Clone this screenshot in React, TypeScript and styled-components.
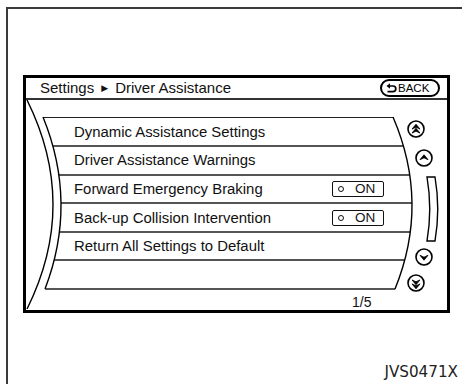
import { FC } from "react";
import styled, { createGlobalStyle } from "styled-components";

const GlobalStyle = createGlobalStyle`
  html, body {
    margin: 0;
    padding: 0;
    background: #fff;
  }
  body {
    font-family: "Liberation Sans", Arial, sans-serif;
    color: #111;
  }
`;

const Frame = styled.div`
  margin: 7px 0 0 6px;
  height: 377px;
  box-sizing: border-box;
  border-left: 2px solid #3a3a3a;
  border-top: 2px solid #3a3a3a;
  padding: 66px 4px 0 15px;
`;

const Screen = styled.div`
  width: 427px;
  height: 238px;
  box-sizing: border-box;
  border: 3px solid #000;
  display: flex;
  flex-direction: column;
`;

const Header = styled.div`
  height: 23px;
  box-sizing: border-box;
  border-bottom: 2px solid #333;
  display: flex;
  align-items: center;
  justify-content: space-between;
  padding: 0 7px 0 14px;

  & > p {
    margin: 0;
    font-size: 15px;
    line-height: 16px;
    display: flex;
    align-items: center;
    gap: 7px;
  }
`;

const Crumb = styled.span`
  font-family: "DejaVu Sans", sans-serif;
  font-size: 9px;
  line-height: 8px;
`;

const BackButton = styled.button`
  width: 60px;
  height: 18px;
  box-sizing: border-box;
  border: 2px solid #000;
  border-radius: 10px;
  background: #fff;
  padding: 0 0 0 4px;
  display: flex;
  align-items: center;
  gap: 1px;
  font-family: "Liberation Sans", Arial, sans-serif;
  font-size: 11.5px;
  color: #000;
`;

const Body = styled.div`
  flex: 1;
  position: relative;
  display: flex;
`;

const Main = styled.div`
  width: 386px;
  display: flex;
  flex-direction: column;
  padding-top: 17px;
`;

const List = styled.div`
  margin-left: 17px;
  border-top: 1px solid #222;
`;

const Row = styled.div`
  height: 28.6px;
  box-sizing: border-box;
  border-bottom: 2px solid #555;
  display: flex;
  align-items: center;
  justify-content: space-between;
  padding: 0 28px 0 31px;
  font-size: 14.9px;
`;

const OnBox = styled.div`
  width: 52px;
  height: 16px;
  box-sizing: border-box;
  border: 1.5px solid #111;
  border-radius: 2px;
  display: flex;
  align-items: center;
  padding-left: 5px;
  font-size: 13.5px;

  & > i {
    width: 6px;
    height: 6px;
    box-sizing: border-box;
    border: 1.5px solid #111;
    border-radius: 50%;
    margin-right: 11px;
  }
`;

const Pager = styled.div`
  padding: 4px 0 0 326px;
  font-size: 14px;
`;

const ScrollColumn = styled.div`
  position: relative;
  z-index: 1;
  display: flex;
  flex-direction: column;
  padding-top: 20px;
`;

const ScrollItem = styled.div<{ $x: number; $mt: number }>`
  margin-left: ${(p) => p.$x}px;
  margin-top: ${(p) => p.$mt}px;
  display: flex;

  & svg {
    display: block;
  }
`;

const Overlay = styled.svg`
  position: absolute;
  left: 0;
  top: 0;
  pointer-events: none;
`;

const Caption = styled.div`
  margin-top: 50px;
  text-align: right;
  font-family: "DejaVu Sans", sans-serif;
  font-size: 15.2px;
  color: #222;
`;

const BackIcon = () => (
  <svg width="11" height="11" viewBox="0 0 11 11">
    <path d="M3.5 3 H7 A2.8 2.8 0 0 1 7 8.6 H1.5" fill="none" stroke="#000" strokeWidth="1.7" />
    <path d="M0.5 3 L4 0.3 L4 5.7 Z" fill="#000" />
  </svg>
);

const Chevron = ({ y, down }: { y: number; down?: boolean }) => (
  <path
    d={
      down
        ? `M9 ${y + 3.6} L5 ${y - 1.3} L9 ${y + 0.6} L13 ${y - 1.3} Z`
        : `M9 ${y - 3.6} L13 ${y + 1.3} L9 ${y - 0.6} L5 ${y + 1.3} Z`
    }
    fill="#000"
    stroke="#000"
    strokeWidth="0.8"
    strokeLinejoin="round"
  />
);

const RoundButton: FC<{ down?: boolean; double?: boolean }> = ({ down, double }) => (
  <svg width="18" height="18" viewBox="0 0 18 18">
    <circle cx="9" cy="9" r="8" fill="#fff" stroke="#000" strokeWidth="1.6" />
    {double ? (
      <>
        <Chevron y={down ? 7.2 : 7.8} down={down} />
        <Chevron y={down ? 11.2 : 11.8} down={down} />
      </>
    ) : (
      <Chevron y={down ? 8.6 : 9.4} down={down} />
    )}
  </svg>
);

const ScrollBar = () => (
  <svg width="14" height="66" viewBox="0 0 14 66">
    <path
      d="M1 1 L9 1 Q14.5 33 9 65 L1 65 Q6.5 33 1 1 Z"
      fill="#fff"
      stroke="#000"
      strokeWidth="1.4"
    />
  </svg>
);

const rows: { label: string; on?: boolean }[] = [
  { label: "Dynamic Assistance Settings" },
  { label: "Driver Assistance Warnings" },
  { label: "Forward Emergency Braking", on: true },
  { label: "Back-up Collision Intervention", on: true },
  { label: "Return All Settings to Default" },
  { label: "" },
];

const App: FC = () => {
  return (
    <>
      <GlobalStyle />
      <Frame>
        <Screen>
          <Header>
            <p>
              Settings <Crumb>▶</Crumb> Driver Assistance
            </p>
            <BackButton>
              <BackIcon />
              BACK
            </BackButton>
          </Header>
          <Body>
            <Main>
              <List>
                {rows.map((r, i) => (
                  <Row key={i}>
                    <span>{r.label}</span>
                    {r.on && (
                      <OnBox>
                        <i />
                        ON
                      </OnBox>
                    )}
                  </Row>
                ))}
              </List>
              <Pager>1/5</Pager>
            </Main>
            <ScrollColumn>
              <ScrollItem $x={-5} $mt={0}>
                <RoundButton double />
              </ScrollItem>
              <ScrollItem $x={3} $mt={11}>
                <RoundButton />
              </ScrollItem>
              <ScrollItem $x={14} $mt={9}>
                <ScrollBar />
              </ScrollItem>
              <ScrollItem $x={3} $mt={6}>
                <RoundButton down />
              </ScrollItem>
              <ScrollItem $x={-5} $mt={8}>
                <RoundButton down double />
              </ScrollItem>
            </ScrollColumn>
            <Overlay width="421" height="209" viewBox="0 0 421 209">
              <path d="M17 16 Q52 103 19 190 L3 190 L3 16 Z" fill="#fff" />
              <path d="M367 16 Q404 103 369 190 L390 190 L390 16 Z" fill="#fff" />
              <path d="M1 0 Q53 104.5 1 209" fill="none" stroke="#000" strokeWidth="1.4" />
              <path d="M17 17 Q52 103 19 189" fill="none" stroke="#000" strokeWidth="1.4" />
              <path d="M367 17 Q404 103 369 189" fill="none" stroke="#000" strokeWidth="1.4" />
            </Overlay>
          </Body>
        </Screen>
        <Caption>JVS0471X</Caption>
      </Frame>
    </>
  );
};

export default App;
